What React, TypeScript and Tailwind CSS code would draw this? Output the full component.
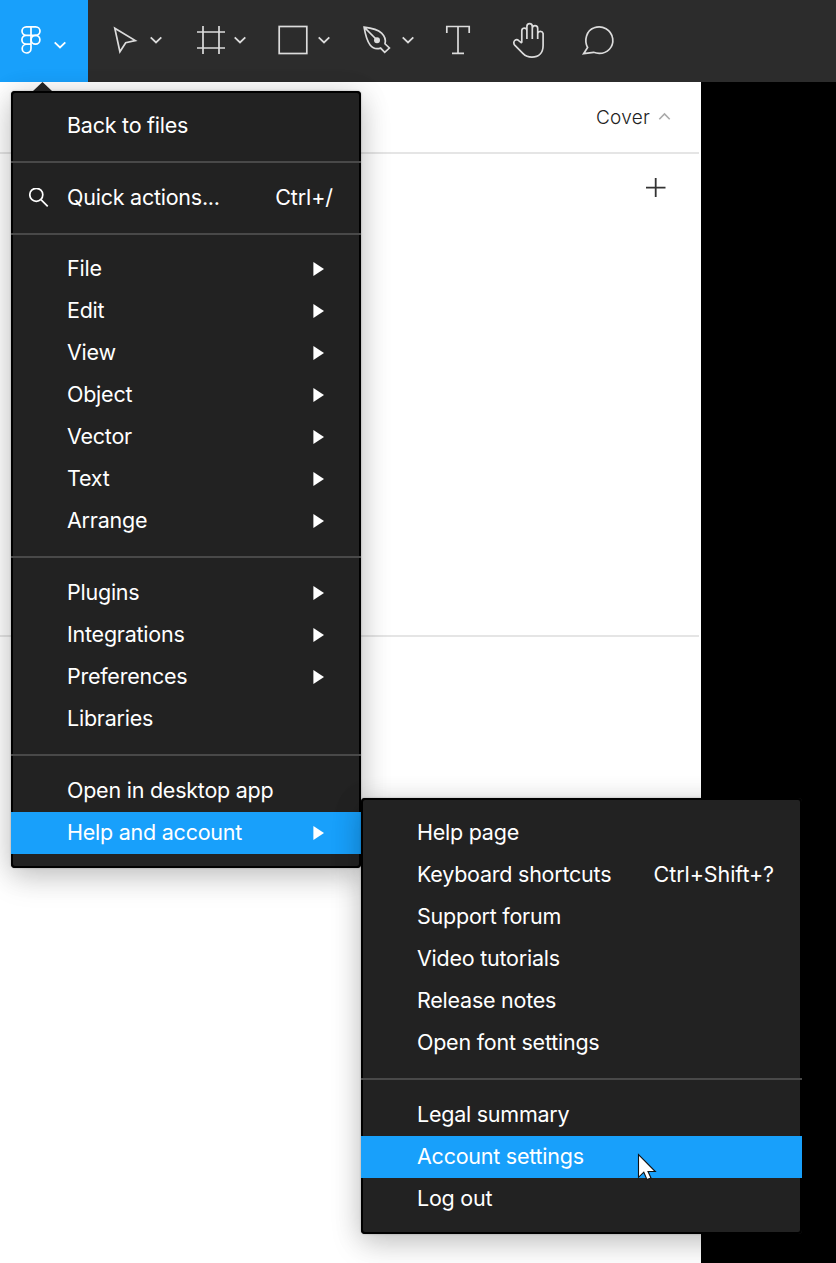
import type { ReactNode } from "react";

function Chevron({ x, y }: { x: number; y: number }) {
  return <path d={`M${x - 5.3} ${y - 2.6}l5.3 5.1 5.3-5.1`} strokeWidth="1.8" />;
}

function Tool({ label, box, className, children }: { label: string; box: string; className: string; children: ReactNode }) {
  return (
    <button aria-label={label} className={`h-[82px] shrink-0 ${className}`}>
      <svg className="block size-full" viewBox={box} fill="none" stroke="currentColor" strokeWidth="1.7">
        {children}
      </svg>
    </button>
  );
}

function Toolbar() {
  return (
    <header className="flex h-[82px] shrink-0 bg-[#2c2c2c] text-[#dcdcdc]">
      <Tool label="Main menu" box="0 0 88 82" className="w-[88px] bg-[#18a0fb] text-white">
        <path d="M31 26.8h-4.7a4.3 4.3 0 0 0 0 8.6h4.7zM31 26.8h4.7a4.3 4.3 0 0 1 0 8.6h-4.7zM31 35.4h-4.7a4.4 4.4 0 0 0 0 8.8h4.7zM31 44.2h-4.5a4.4 4.4 0 1 0 4.5 4.4z" />
        <circle cx="35.5" cy="39.8" r="4.4" />
        <Chevron x={60} y={45} />
      </Tool>
      <Tool label="Move" box="88 0 84 82" className="w-[84px]">
        <path d="M114.8 28.3L135.3 40.6L125.7 42.7L119.9 51.8Z" />
        <Chevron x={156} y={40} />
      </Tool>
      <Tool label="Frame" box="172 0 84 82" className="w-[84px]">
        <path d="M203 26v28M219 26v28M197 32h28M197 48h28" />
        <Chevron x={240} y={40} />
      </Tool>
      <Tool label="Shape" box="256 0 84 82" className="w-[84px]">
        <rect x="279.2" y="26.5" width="27.6" height="27" />
        <Chevron x={324} y={40} />
      </Tool>
      <Tool label="Pen" box="340 0 84 82" className="w-[84px]">
        <path d="M364.1 27.2C371.5 28.1 377.8 29.6 381.6 33.2C385.1 36.6 385.9 40.4 385 43.8L389.4 48L384.7 52.4L380.6 48.1C376.5 49.5 372.6 48.2 370.1 45C366.7 40.6 365.3 34.4 364.1 27.2ZM364.1 27.2L377 40" />
        <circle cx="377" cy="40.2" r="3" fill="currentColor" stroke="none" />
        <Chevron x={408} y={40} />
      </Tool>
      <Tool label="Text" box="424 0 70 82" className="w-[70px]">
        <path d="M446.8 33v-6.5h22.4V33M458 26.5v27M452 53.4h12" />
      </Tool>
      <Tool label="Hand" box="494 0 70 82" className="w-[70px]">
        <path d="M521.8 42.8V30.3a2.6 2.6 0 0 1 5.1 0M526.9 39V26.4a2.7 2.7 0 0 1 5.4 0V39M532.3 28.4a2.7 2.7 0 0 1 5.4 0V39M537.7 33.4a2.8 2.8 0 0 1 5.4 0V45.5c0 7.6-4.6 11.6-11.2 11.6-4 0-6.5-1.2-8.8-3.5l-8.4-8.5c-1.4-1.5-1-3.8.2-4.7 1.2-.9 2.7-.8 3.8.2l3.1 2.6" />
      </Tool>
      <Tool label="Comment" box="564 0 70 82" className="w-[70px]">
        <path d="M583.6 53.7L587.6 47.5C583.8 40 586.4 30.6 594.2 27.8C602.4 24.6 611.4 30 612.7 38.6C613.8 47.2 607.2 53.4 599.3 53.4C597.3 53.4 595.4 53 593.5 52.3Z" />
      </Tool>
    </header>
  );
}

type Entry = { label: string; keys?: string; arrow?: boolean; active?: boolean; search?: boolean };

function Row({ label, keys, arrow, active, search }: Entry) {
  return (
    <li className={`flex h-[42px] items-center pl-[18px] ${active ? "bg-[#18a0fb]" : ""}`}>
      <span className="w-[38px]">
        {search && (
          <svg className="size-5" viewBox="0 0 20 20" fill="none" stroke="currentColor" strokeWidth="1.7">
            <circle cx="7.3" cy="6.8" r="6.5" />
            <path d="M12 11.6l6.7 6.7" />
          </svg>
        )}
      </span>
      <span className="flex-1 pb-px whitespace-nowrap">{label}</span>
      {keys && <span className="mr-7 pb-px tracking-[-0.08px] whitespace-nowrap">{keys}</span>}
      {arrow && (
        <svg className="mr-[37px] h-[14px] w-[11px]" viewBox="0 0 11 14" fill="currentColor">
          <path d="M.4 0L11 7L.4 14Z" />
        </svg>
      )}
    </li>
  );
}

function Divider({ tight = false }: { tight?: boolean }) {
  return <li className={`mt-[14px] h-[2px] bg-[#494949] ${tight ? "mb-[13px]" : "mb-[14px]"}`} />;
}

function Menu({ className, children }: { className: string; children: ReactNode }) {
  return (
    <div className={`absolute bg-[#222222] text-white shadow-[0_4px_28px_rgba(0,0,0,0.15),0_10px_32px_rgba(0,0,0,0.15),0_0_2px_rgba(0,0,0,0.3)] rounded-[4px] ${className}`}>
      <div className="pointer-events-none absolute inset-0 rounded-[4px] border-2 border-black" />
      <ul className="relative py-[14px]">{children}</ul>
    </div>
  );
}

const editing = ["File", "Edit", "View", "Object", "Vector", "Text", "Arrange"];
const extras = ["Plugins", "Integrations", "Preferences"];
const help = ["Support forum", "Video tutorials", "Release notes", "Open font settings"];

export default function App() {
  return (
    <div className="relative flex h-[1263px] w-[836px] flex-col overflow-hidden bg-black font-['Inter',sans-serif] text-[21.5px] leading-[41px] tracking-[-0.24px]">
      <Toolbar />
      <main className="flex w-[701px] flex-1 flex-col bg-white pr-[2px]">
        <div className="flex h-[72px] items-center justify-end gap-[8px] border-b-2 border-[#e5e5e5] pr-[28px] text-[19px] font-light tracking-[0.25px] text-[#222222]">
          <span className="pt-px">Cover</span>
          <svg className="size-[13px]" viewBox="0 0 13 13" fill="none" stroke="#aaaaaa" strokeWidth="1.6">
            <path d="M1.3 8.2L6.5 3l5.2 5.2" />
          </svg>
        </div>
        <div className="flex h-[483px] items-start justify-end border-b-2 border-[#e5e5e5] pt-[24px] pr-[33px]">
          <svg className="size-5" viewBox="0 0 20 20" stroke="#333333" strokeWidth="1.8">
            <path d="M9.7 0v19M0 9.6h19.5" />
          </svg>
        </div>
      </main>

      <Menu className="top-[91px] left-[11px] w-[350px]">
        <Row label="Back to files" />
        <Divider />
        <Row label="Quick actions..." keys="Ctrl+/" search />
        <Divider tight />
        {editing.map((label) => <Row key={label} label={label} arrow />)}
        <Divider />
        {extras.map((label) => <Row key={label} label={label} arrow />)}
        <Row label="Libraries" />
        <Divider />
        <Row label="Open in desktop app" />
        <Row label="Help and account" arrow active />
      </Menu>
      <svg className="absolute top-[82px] left-[33px] h-[9px] w-[19px]" viewBox="0 0 19 9" fill="#222222">
        <path d="M0 9L9.5 0L19 9Z" />
      </svg>

      <Menu className="top-[798px] left-[361px] w-[441px]">
        <Row label="Help page" />
        <Row label="Keyboard shortcuts" keys="Ctrl+Shift+?" />
        {help.map((label) => <Row key={label} label={label} />)}
        <Divider />
        <Row label="Legal summary" />
        <Row label="Account settings" active />
        <Row label="Log out" />
      </Menu>
      <svg className="absolute top-[1153px] left-[637px] h-[29px] w-[20px]" viewBox="0 0 20 29" fill="white" stroke="#111111" strokeWidth="1.1">
        <path d="M1.5 1.5V24.3L6.8 19.2L10 26.6L14 25L11 18.5H18.3Z" />
      </svg>
    </div>
  );
}
